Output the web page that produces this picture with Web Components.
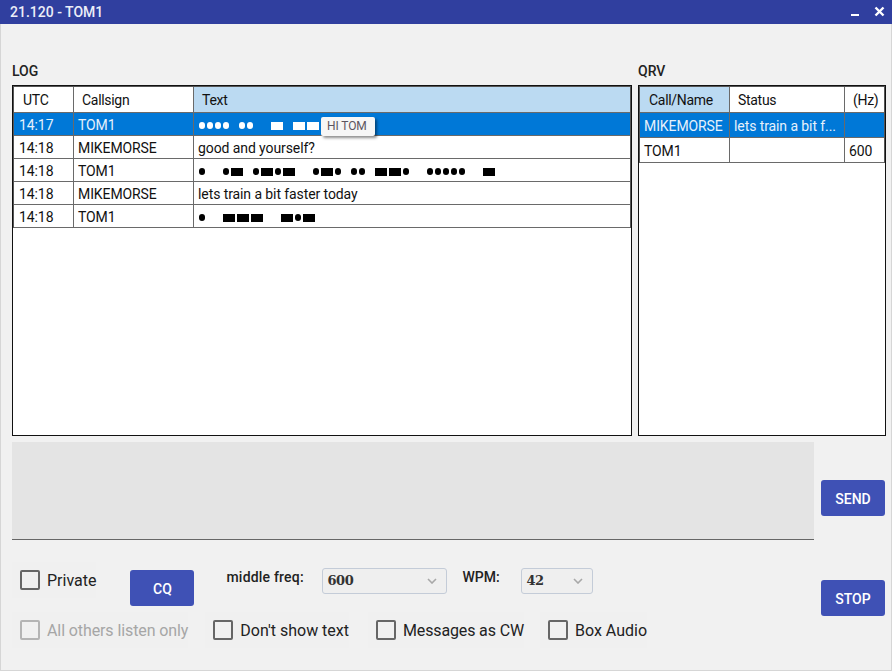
<!DOCTYPE html>
<html>
<head>
<meta charset="utf-8">
<title>21.120 - TOM1</title>
<style>
  html, body { margin: 0; height: 100%; background: #f1f1f1; }
  body { font-family: Roboto, "Liberation Sans", sans-serif; overflow: hidden; }
</style>
</head>
<body>
<cw-window>
  <title-bar slot="title">21.120 - TOM1</title-bar>

  <titled-panel slot="log" label="LOG" style="--cols: 60px 120px 1fr; --first-pad: 5px">
    <dt-row head>
      <dt-cell head>UTC</dt-cell><dt-cell head>Callsign</dt-cell><dt-cell head sorted>Text</dt-cell>
    </dt-row>
    <dt-row selected>
      <dt-cell>14:17</dt-cell><dt-cell>TOM1</dt-cell>
      <dt-cell><morse-code code=".... .. / - --- --"></morse-code><hint-tip>HI TOM</hint-tip></dt-cell>
    </dt-row>
    <dt-row><dt-cell>14:18</dt-cell><dt-cell>MIKEMORSE</dt-cell><dt-cell>good and yourself?</dt-cell></dt-row>
    <dt-row>
      <dt-cell>14:18</dt-cell><dt-cell>TOM1</dt-cell>
      <dt-cell><morse-code code=". / .- .-.- / .-. .. --. / ..... / -"></morse-code></dt-cell>
    </dt-row>
    <dt-row><dt-cell>14:18</dt-cell><dt-cell>MIKEMORSE</dt-cell><dt-cell>lets train a bit faster today</dt-cell></dt-row>
    <dt-row>
      <dt-cell>14:18</dt-cell><dt-cell>TOM1</dt-cell>
      <dt-cell><morse-code code=". / --- / -.-"></morse-code></dt-cell>
    </dt-row>
  </titled-panel>

  <titled-panel slot="qrv" label="QRV" style="--cols: 90px 115px 1fr; --row-h: 25px; --first-pad: 4px">
    <dt-row head>
      <dt-cell head sorted>Call/Name</dt-cell><dt-cell head>Status</dt-cell><dt-cell head>(Hz)</dt-cell>
    </dt-row>
    <dt-row selected><dt-cell>MIKEMORSE</dt-cell><dt-cell>lets train a bit f...</dt-cell><dt-cell></dt-cell></dt-row>
    <dt-row><dt-cell>TOM1</dt-cell><dt-cell></dt-cell><dt-cell>600</dt-cell></dt-row>
  </titled-panel>

  <message-box slot="input"></message-box>

  <control-rows slot="controls">
    <check-option slot="first">Private</check-option>
    <blue-button slot="first" style="margin: 8px 0 0 34px">CQ</blue-button>
    <field-label slot="first" style="margin-left: 32px; width: 96px; letter-spacing: .2px">middle freq:</field-label>
    <drop-select slot="first" style="width: 125px">600</drop-select>
    <field-label slot="first" style="margin-left: 15px; width: 59px">WPM:</field-label>
    <drop-select slot="first" style="width: 72px">42</drop-select>

    <check-option slot="second" disabled style="letter-spacing: -.1px">All others listen only</check-option>
    <check-option slot="second" style="margin-left: 17px">Don't show text</check-option>
    <check-option slot="second" style="margin-left: 19px; letter-spacing: -.14px">Messages as CW</check-option>
    <check-option slot="second" style="margin-left: 16px">Box Audio</check-option>
  </control-rows>

  <blue-button slot="actions">SEND</blue-button>
  <blue-button slot="actions" style="margin-top: 64px">STOP</blue-button>
</cw-window>

<script>
function shadow(el, html) {
  el.attachShadow({ mode: "open" }).innerHTML = html
}

class CwWindow extends HTMLElement {
  constructor() {
    super()
    shadow(this, `
      <style>
        :host {
          display: flex;
          flex-direction: column;
          box-sizing: border-box;
          width: 892px;
          height: 671px;
          background: #f1f1f1;
          border-left: 1px solid #d6d6d6;
          border-bottom: 1px solid #d6d6d6;
          border-right: 1px solid #d6d6d6;
        }
        .panels {
          display: flex;
          gap: 6px;
          padding: 41px 5px 0 11px;
        }
        .lower {
          display: grid;
          grid-template-columns: 802px 64px;
          column-gap: 7px;
          padding: 6px 0 0 11px;
        }
        .actions {
          display: flex;
          flex-direction: column;
          padding-top: 38px;
        }
      </style>
      <slot name="title"></slot>
      <div class="panels">
        <slot name="log"></slot>
        <slot name="qrv"></slot>
      </div>
      <div class="lower">
        <div>
          <slot name="input"></slot>
          <slot name="controls"></slot>
        </div>
        <div class="actions"><slot name="actions"></slot></div>
      </div>
    `)
  }
}

class TitleBar extends HTMLElement {
  constructor() {
    super()
    shadow(this, `
      <style>
        :host {
          display: flex;
          align-items: center;
          height: 24px;
          margin: 0 -1px;
          padding: 0 7px 0 10px;
          background: #303f9f;
          color: #eceef8;
          font: 500 14px Roboto, sans-serif;
        }
        .text { flex: 1; }
        svg { display: block; }
      </style>
      <span class="text"><slot></slot></span>
      <svg width="36" height="24" viewBox="0 0 36 24">
        <path d="M2 15h8" stroke="#fff" stroke-width="2" fill="none"/>
        <path d="M26.5 7.5l8 8M34.5 7.5l-8 8" stroke="#fff" stroke-width="2.4" fill="none"/>
      </svg>
    `)
  }
}

class TitledPanel extends HTMLElement {
  constructor() {
    super()
    const wide = this.getAttribute("label") === "LOG"
    shadow(this, `
      <style>
        :host { display: block; width: ${wide ? 620 : 248}px; }
        .label {
          height: 20px;
          font: 500 14px/13px Roboto, sans-serif;
          color: #222;
        }
        .table {
          box-sizing: border-box;
          height: 351px;
          background: #fff;
          border: 1px solid #111;
        }
        .rows {
          border: 1px solid #555;
          border-bottom: 0;
          background: #fff;
        }
      </style>
      <div class="label">${this.getAttribute("label")}</div>
      <div class="table"><div class="rows"><slot></slot></div></div>
    `)
  }
}

class DtRow extends HTMLElement {
  constructor() {
    super()
    shadow(this, `
      <style>
        :host {
          display: grid;
          grid-template-columns: var(--cols);
          box-sizing: border-box;
          height: var(--row-h, 23px);
          border-bottom: 1px solid #6a6a6a;
          font: 14px Roboto, sans-serif;
          letter-spacing: -.09px;
          color: #111;
        }
        :host([head]) { height: 26px; letter-spacing: -.3px; }
        :host([selected]) { background: #0078d7; color: #e6f1fb; }
      </style>
      <slot></slot>
    `)
  }
}

class DtCell extends HTMLElement {
  constructor() {
    super()
    shadow(this, `
      <style>
        :host {
          display: flex;
          position: relative;
          align-items: center;
          box-sizing: border-box;
          min-width: 0;
          padding: 2px 0 0 4px;
          border-right: 1px solid #6a6a6a;
          white-space: nowrap;
        }
        :host(:first-child) { padding-left: var(--first-pad, 4px); }
        :host([head]) { padding: 0 0 0 8px; background: #fff; }
        :host([head]:first-child) { padding-left: 9px; }
        :host([sorted]) { background: #bbdaf2; }
        :host(:last-child) { border-right: 0; }
      </style>
      <slot></slot>
    `)
  }
}

class MorseCode extends HTMLElement {
  constructor() {
    super()
    let marks = ""
    for (const word of this.getAttribute("code").split(" / ")) {
      marks += '<span class="word">'
      for (const letter of word.split(" ")) {
        marks += '<span class="letter">'
        for (const c of letter) marks += `<i class="${c === "." ? "dot" : "dash"}"></i>`
        marks += "</span>"
      }
      marks += "</span>"
    }
    shadow(this, `
      <style>
        :host { display: flex; gap: 18px; padding: 1px 0 0 1px; color: #000; }
        :host-context(dt-row[selected]) { color: #fff; }
        .word { display: flex; gap: 10px; }
        .letter { display: flex; gap: 2px; align-items: center; }
        i { display: block; background: currentColor; }
        .dot { width: 6.6px; height: 6.6px; margin: 0 -.3px; border-radius: 50%; }
        .dash { width: 12px; height: 8px; }
      </style>
      ${marks}
    `)
  }
}

class HintTip extends HTMLElement {
  constructor() {
    super()
    shadow(this, `
      <style>
        :host {
          position: absolute;
          left: 127px;
          top: 4px;
          box-sizing: border-box;
          width: 54px;
          height: 19px;
          padding-left: 6px;
          background: #f6f6f6;
          border-radius: 2px;
          box-shadow: 2px 2px 3px rgba(0, 0, 0, .45);
          color: #5c5560;
          font: 12px/19px Roboto, sans-serif;
        }
      </style>
      <slot></slot>
    `)
  }
}

class MessageBox extends HTMLElement {
  constructor() {
    super()
    shadow(this, `
      <style>
        :host {
          display: block;
          box-sizing: border-box;
          height: 98px;
          background: #e4e4e4;
          border-bottom: 1px solid #666;
        }
      </style>
    `)
  }
}

class ControlRows extends HTMLElement {
  constructor() {
    super()
    shadow(this, `
      <style>
        :host { display: flex; flex-direction: column; gap: 14px; padding-top: 22px; }
        .row { display: flex; align-items: flex-start; height: 36px; }
      </style>
      <div class="row"><slot name="first"></slot></div>
      <div class="row"><slot name="second"></slot></div>
    `)
  }
}

class CheckOption extends HTMLElement {
  constructor() {
    super()
    shadow(this, `
      <style>
        :host {
          display: flex;
          align-items: center;
          gap: 7px;
          height: 36px;
          padding-left: 8px;
          background: #f0f0f0;
          color: #222;
          font: 16px Roboto, sans-serif;
          white-space: nowrap;
        }
        .box {
          box-sizing: border-box;
          width: 20px;
          height: 20px;
          border: 2px solid #666;
          border-radius: 2px;
        }
        :host([disabled]) { color: #a6a6a6; }
        :host([disabled]) .box { border-color: #b4b4b4; }
      </style>
      <span class="box"></span><slot></slot>
    `)
  }
}

class BlueButton extends HTMLElement {
  constructor() {
    super()
    shadow(this, `
      <style>
        :host {
          display: flex;
          align-items: center;
          justify-content: center;
          flex: none;
          box-sizing: border-box;
          width: 64px;
          height: 36px;
          padding-top: 1px;
          background: #3f51b5;
          border-radius: 3px;
          color: #fff;
          font: 500 14px Roboto, sans-serif;
        }
      </style>
      <slot></slot>
    `)
  }
}

class FieldLabel extends HTMLElement {
  constructor() {
    super()
    shadow(this, `
      <style>
        :host {
          display: block;
          flex: none;
          margin-top: 7px;
          color: #222;
          font: 500 14px/16px Roboto, sans-serif;
        }
      </style>
      <slot></slot>
    `)
  }
}

class DropSelect extends HTMLElement {
  constructor() {
    super()
    shadow(this, `
      <style>
        :host {
          display: flex;
          align-items: center;
          justify-content: space-between;
          flex: none;
          box-sizing: border-box;
          height: 26px;
          margin-top: 6px;
          padding: 0 9px 1px 4px;
          background: #efefef;
          border: 1px solid #c4ccd8;
          border-radius: 3px;
          color: #333;
          font: bold 13px "DejaVu Serif", serif;
          letter-spacing: -.4px;
        }
        svg { display: block; }
      </style>
      <slot></slot>
      <svg width="10" height="6" viewBox="0 0 10 6"><path d="M1 1l4 4 4-4" fill="none" stroke="#a8a8a8" stroke-width="1.6"/></svg>
    `)
  }
}

customElements.define("cw-window", CwWindow)
customElements.define("title-bar", TitleBar)
customElements.define("titled-panel", TitledPanel)
customElements.define("dt-row", DtRow)
customElements.define("dt-cell", DtCell)
customElements.define("morse-code", MorseCode)
customElements.define("hint-tip", HintTip)
customElements.define("message-box", MessageBox)
customElements.define("control-rows", ControlRows)
customElements.define("check-option", CheckOption)
customElements.define("blue-button", BlueButton)
customElements.define("field-label", FieldLabel)
customElements.define("drop-select", DropSelect)
</script>
</body>
</html>
